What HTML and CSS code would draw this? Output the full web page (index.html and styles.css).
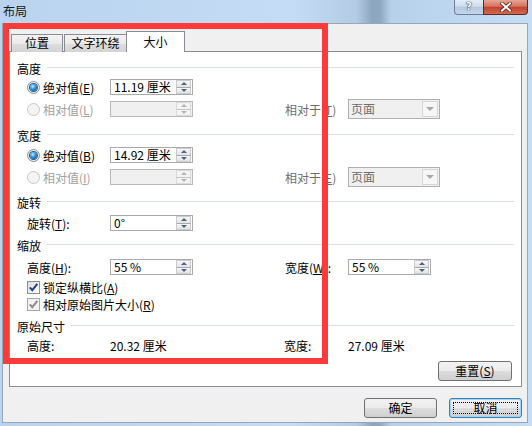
FILE: index.html
```html
<!DOCTYPE html>
<html>
<head>
<meta charset="utf-8">
<link rel="stylesheet" href="styles.css">
</head>
<body>
<div class="window">
  <div class="titlebar">
    <span class="title">布局</span>
    <div class="caption">
      <div class="cap-help">?</div>
      <div class="cap-close">
        <svg width="12" height="10" viewBox="0 0 12 10"><path d="M2 1.5 L10 8.5 M10 1.5 L2 8.5" stroke="#5a2a22" stroke-width="3.6" stroke-linecap="square" fill="none"/><path d="M2 1.5 L10 8.5 M10 1.5 L2 8.5" stroke="#ffffff" stroke-width="2" stroke-linecap="square" fill="none"/></svg>
      </div>
    </div>
  </div>
  <div class="dialog">
    <div class="tabs">
      <div class="tab t1">位置</div>
      <div class="tab t2">文字环绕</div>
      <div class="tab active">大小</div>
    </div>
    <div class="panel">
      <div class="hdr mt8">高度</div>
      <div class="row mt2">
        <div class="lbl"><span class="radio on"></span>绝对值(<u>E</u>)</div>
        <div class="field"><span class="val">11.19 厘米</span><span class="spin"><i class="up"></i><i class="dn"></i></span></div>
      </div>
      <div class="row tall mt2">
        <div class="lbl dis"><span class="radio off"></span>相对值(<u>L</u>)</div>
        <div class="field disabled"><span class="val"></span><span class="spin"><i class="up"></i><i class="dn"></i></span></div>
        <div class="rlbl dis2">相对于(<u>T</u>)</div>
        <div class="combo"><span class="val">页面</span><span class="arrow"></span></div>
      </div>

      <div class="hdr mt7">宽度</div>
      <div class="row mt3">
        <div class="lbl"><span class="radio on"></span>绝对值(<u>B</u>)</div>
        <div class="field"><span class="val">14.92 厘米</span><span class="spin"><i class="up"></i><i class="dn"></i></span></div>
      </div>
      <div class="row tall mt2">
        <div class="lbl dis"><span class="radio off"></span>相对值(<u>I</u>)</div>
        <div class="field disabled"><span class="val"></span><span class="spin"><i class="up"></i><i class="dn"></i></span></div>
        <div class="rlbl dis2">相对于(<u>E</u>)</div>
        <div class="combo"><span class="val">页面</span><span class="arrow"></span></div>
      </div>

      <div class="hdr mt6">旋转</div>
      <div class="row mt4">
        <div class="lbl pad">旋转(<u>T</u>):</div>
        <div class="field"><span class="val">0°</span><span class="spin"><i class="up"></i><i class="dn"></i></span></div>
      </div>

      <div class="hdr mt5">缩放</div>
      <div class="row mt5">
        <div class="lbl pad">高度(<u>H</u>):</div>
        <div class="field"><span class="val">55 %</span><span class="spin"><i class="up"></i><i class="dn"></i></span></div>
        <div class="rlbl">宽度(<u>W</u>):</div>
        <div class="field"><span class="val">55 %</span><span class="spin"><i class="up"></i><i class="dn"></i></span></div>
      </div>
      <div class="check mt3">
        <span class="cb"><svg width="11" height="11" viewBox="0 0 11 11"><path d="M1.8 5.4 L4.3 8.2 L9.3 1.8" stroke="#1f3f8f" stroke-width="2" fill="none"/></svg></span>锁定纵横比(<u>A</u>)
      </div>
      <div class="check mt1">
        <span class="cb cb-dis"><svg width="11" height="11" viewBox="0 0 11 11"><path d="M1.8 5.4 L4.3 8.2 L9.3 1.8" stroke="#8a8a8a" stroke-width="2" fill="none"/></svg></span>相对原始图片大小(<u>R</u>)
      </div>

      <div class="hdr mt6">原始尺寸</div>
      <div class="info mt3">
        <span class="c1">高度:</span>
        <span class="c2">20.32 厘米</span>
        <span class="c3">宽度:</span>
        <span class="c4">27.09 厘米</span>
      </div>

      <div class="reset-row">
        <button class="btn reset">重置(<u>S</u>)</button>
      </div>
    </div>
    <div class="footer">
      <button class="btn">确定</button>
      <button class="btn default">取消</button>
    </div>
  </div>
  <div class="annot"></div>
</div>
</body>
</html>
```

FILE: styles.css
```css
* { box-sizing: border-box; }
html, body { margin: 0; padding: 0; }
body {
  width: 532px;
  height: 426px;
  overflow: hidden;
  font-family: "Noto Sans CJK SC", "Liberation Sans", sans-serif;
  font-size: 12px;
  color: #000;
}
u { text-decoration: underline; text-underline-offset: 1px; }

.window {
  position: relative;
  width: 532px;
  height: 426px;
  display: flex;
  flex-direction: column;
  background: linear-gradient(to right, #bad3ee 0%, #c4dcf5 55%, #b3cbe4 67%, #8da6bf 70%, #90a9c2 71.5%, #b8d1eb 73.5%, #c5ddf5 100%);
}

.titlebar {
  height: 23px;
  display: flex;
  align-items: flex-start;
}
.title {
  margin: 3px 0 0 3px;
  line-height: 16px;
  color: #101820;
}
.caption {
  margin-left: auto;
  margin-right: 4px;
  display: flex;
}
.cap-help {
  width: 29px;
  height: 15px;
  border: 1px solid #6f7f93;
  border-top: none;
  border-right: none;
  border-radius: 0 0 0 4px;
  background: linear-gradient(#e4edf7, #cfdcec 45%, #b6c8de 50%, #c4d6ec);
  color: #fff;
  font-family: "DejaVu Sans", sans-serif;
  font-weight: bold;
  font-size: 11px;
  line-height: 13px;
  text-align: center;
  text-shadow: 0 0 1px #33414f, 0 0 1px #33414f, 0 0 1px #33414f;
}
.cap-close {
  width: 45px;
  height: 15px;
  border: 1px solid #5e2a24;
  border-top: none;
  border-radius: 0 0 4px 0;
  background: linear-gradient(#e6a696, #d77260 45%, #c3432e 52%, #d06a52);
  display: flex;
  align-items: center;
  justify-content: center;
}

.dialog {
  flex: 1;
  margin: 0 4px 3px 2px;
  background: #f0f0f0;
  border: 1px solid #9aa6b3;
  padding: 7px 5px 0 6px;
  display: flex;
  flex-direction: column;
}

.tabs {
  display: flex;
  align-items: flex-end;
  height: 21px;
  padding-left: 2px;
  position: relative;
  z-index: 1;
}
.tab {
  height: 18px;
  border: 1px solid #898c95;
  border-bottom: none;
  background: linear-gradient(#f3f3f3, #ebebeb 50%, #dddddd 52%, #d4d4d4);
  line-height: 16px;
  text-align: center;
}
.t1 { width: 52px; }
.t2 { width: 63px; margin-left: 1px; }
.tab.active {
  width: 59px;
  height: 21px;
  margin-left: -1px;
  background: #fff;
  line-height: 20px;
}

.panel {
  margin-top: -1px;
  height: 336px;
  border: 1px solid #898c95;
  background: #fff;
  padding: 0 7px;
  display: flex;
  flex-direction: column;
}

.hdr {
  display: flex;
  align-items: center;
  height: 16px;
  white-space: nowrap;
}
.hdr::after {
  content: "";
  flex: 1;
  height: 1px;
  margin: 0 0 2px 6px;
  background: #d5dfe5;
}

.mt1 { margin-top: 1px; }
.mt2 { margin-top: 2px; }
.mt3 { margin-top: 3px; }
.mt4 { margin-top: 4px; }
.mt5 { margin-top: 5px; }
.mt6 { margin-top: 6px; }
.mt7 { margin-top: 7px; }
.mt8 { margin-top: 8px; }

.row {
  display: flex;
  align-items: center;
  height: 18px;
  padding-left: 10px;
}
.row.tall { height: 22px; }
.lbl {
  width: 83px;
  display: flex;
  align-items: center;
  white-space: nowrap;
}
.lbl.pad { padding-left: 0; }
.dis { color: #a0a0a0; }
.dis2 { color: #6d6d6d; }

.radio {
  width: 13px;
  height: 13px;
  margin-right: 3px;
  border-radius: 50%;
  border: 1px solid #8e8f8f;
  background: radial-gradient(circle at 50% 40%, #ffffff, #e4e4e4);
  display: flex;
  align-items: center;
  justify-content: center;
}
.radio.on::after {
  content: "";
  width: 7px;
  height: 7px;
  border-radius: 50%;
  background: radial-gradient(circle at 40% 35%, #c6ecff 0%, #3a9be0 40%, #0d4f8c 85%);
  box-shadow: 0 0 0 1px #1b5a94;
}
.radio.off {
  border-color: #c8c8c8;
  background: #f4f4f4;
}

.field {
  width: 83px;
  height: 16px;
  border: 1px solid #a7abb0;
  background: #fff;
  display: flex;
}
.field .val {
  flex: 1;
  padding-left: 3px;
  line-height: 14px;
  white-space: nowrap;
}
.field.disabled {
  background: #f0f0f0;
  border-color: #b8b8b8;
}
.spin {
  width: 15px;
  margin: 0 1px 0 0;
  display: flex;
  flex-direction: column;
  background: #fff;
}
.spin i {
  flex: 1;
  display: flex;
  align-items: center;
  justify-content: center;
  background: linear-gradient(#f7f7f7, #e3e3e3);
  border: 1px solid #c9cbcd;
}
.spin i.up { border-bottom-color: #a9a9a9; }
.spin i.dn { border-top: none; }
.spin i.up::before {
  content: "";
  border-left: 3px solid transparent;
  border-right: 3px solid transparent;
  border-bottom: 3px solid #4d6185;
}
.spin i.dn::before {
  content: "";
  border-left: 3px solid transparent;
  border-right: 3px solid transparent;
  border-top: 3px solid #4d6185;
}
.field.disabled .spin i { background: #f4f4f4; border-color: #dadada; }
.field.disabled .spin i.up { border-bottom-color: #c4c4c4; }
.field.disabled .spin i.up::before { border-bottom-color: #b4b4b4; }
.field.disabled .spin i.dn::before { border-top-color: #b4b4b4; }

.rlbl {
  margin-left: 92px;
  width: 63px;
  white-space: nowrap;
}

.combo {
  width: 92px;
  height: 20px;
  border: 1px solid #adb0b3;
  background: #f0f0f0;
  display: flex;
}
.combo .val {
  flex: 1;
  padding-left: 2px;
  line-height: 18px;
  color: #6d6d6d;
}
.combo .arrow {
  width: 16px;
  margin: 1px 1px 1px 0;
  background: #f6f6f6;
  border: 1px solid #d6d6d6;
  display: flex;
  align-items: center;
  justify-content: center;
}
.combo .arrow::before {
  content: "";
  border-left: 4px solid transparent;
  border-right: 4px solid transparent;
  border-top: 4px solid #a8a8a8;
}

.check {
  display: flex;
  align-items: center;
  height: 16px;
  padding-left: 10px;
  white-space: nowrap;
}
.cb {
  width: 13px;
  height: 13px;
  margin-right: 3px;
  border: 1px solid #8e8f8f;
  background: linear-gradient(135deg, #dcdcdc, #ffffff);
  display: flex;
  align-items: center;
  justify-content: center;
}
.cb-dis {
  border-color: #a8a8a8;
  background: #f2f2f2;
}

.info {
  display: flex;
  align-items: center;
  height: 16px;
  padding-left: 10px;
  white-space: nowrap;
}
.c1 { width: 83px; }
.c2 { width: 174px; }
.c3 { width: 64px; }

.reset-row {
  display: flex;
  justify-content: flex-end;
  margin-top: 8px;
  padding-right: 2px;
}

.btn {
  width: 74px;
  height: 20px;
  padding: 0;
  border: 1px solid #707070;
  border-radius: 3px;
  background: linear-gradient(#f2f2f2 0%, #ebebeb 48%, #dddddd 52%, #cfcfcf 100%);
  font-family: inherit;
  font-size: 12px;
  line-height: 18px;
  color: #000;
  position: relative;
}
.footer {
  display: flex;
  justify-content: flex-end;
  gap: 12px;
  margin-top: 11px;
}
.footer .btn { width: 73px; }
.btn.default {
  border-color: #3c7fb1;
  box-shadow: inset 0 0 0 1px #9fd4f4;
}
.btn.default::after {
  content: "";
  position: absolute;
  left: 3px;
  right: 3px;
  top: 3px;
  bottom: 3px;
  border: 1px dotted #000;
}

.annot {
  position: absolute;
  left: 3px;
  top: 23px;
  width: 325px;
  height: 341px;
  border: 6px solid #fc3a3a;
  pointer-events: none;
  z-index: 5;
}
```
